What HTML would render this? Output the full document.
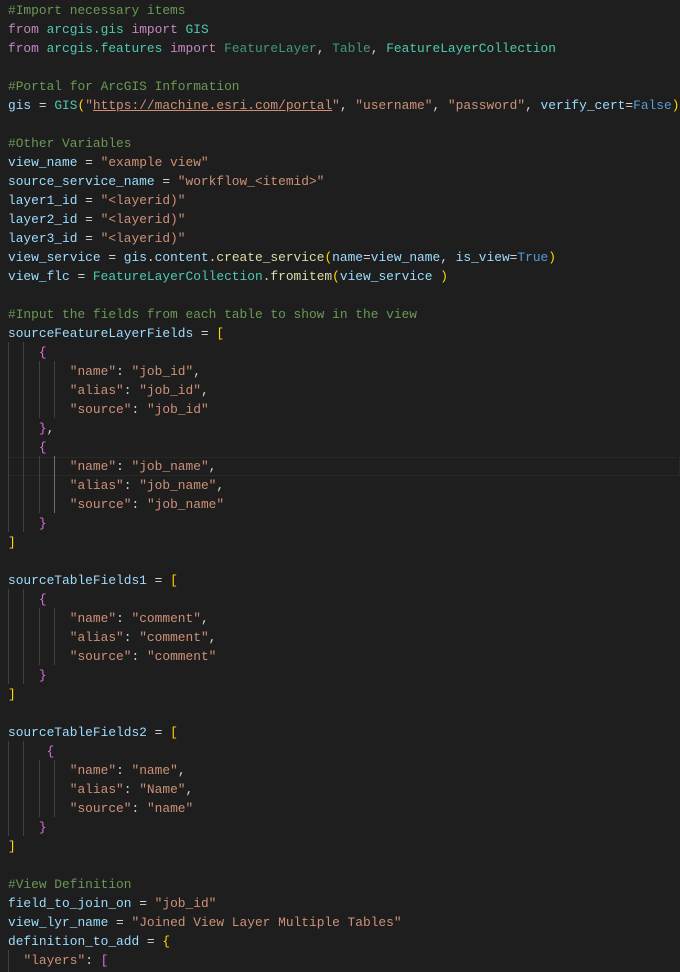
<!DOCTYPE html>
<html><head><meta charset="utf-8"><style>
body{margin:0;background:#1e1e1e;width:680px;height:972px;overflow:hidden;position:relative}
.c{position:absolute;left:8px;top:1px;font-family:"Liberation Mono",monospace;font-size:12.87px;line-height:19px;color:#d4d4d4;white-space:normal}
.l{height:19px;white-space:pre}
.cm{color:#6a9955}.k{color:#c586c0}.t{color:#4ec9b0}.td{color:#4ec9b0;opacity:.7}.v{color:#9cdcfe}.s{color:#ce9178}.f{color:#dcdcaa}.b{color:#569cd6}
.y{color:#ffd700}.p{color:#da70d6}.u{text-decoration:underline;text-decoration-color:#ce9178}
.g{position:absolute;width:1px;background:#404040}
.hl{position:absolute;left:8px;right:0;top:457px;height:17px;border:1px solid #282828}
</style></head><body>
<div class="hl"></div>
<div class="g" style="left:8px;top:342px;height:190px"></div>
<div class="g" style="left:23px;top:342px;height:190px"></div>
<div class="g" style="left:39px;top:361px;height:57px"></div>
<div class="g" style="left:54px;top:361px;height:57px"></div>
<div class="g" style="left:39px;top:456px;height:57px"></div>
<div class="g" style="left:54px;top:456px;height:57px;background:#707070"></div>
<div class="g" style="left:8px;top:589px;height:95px"></div>
<div class="g" style="left:23px;top:589px;height:95px"></div>
<div class="g" style="left:39px;top:608px;height:57px"></div>
<div class="g" style="left:54px;top:608px;height:57px"></div>
<div class="g" style="left:8px;top:741px;height:95px"></div>
<div class="g" style="left:23px;top:741px;height:95px"></div>
<div class="g" style="left:39px;top:760px;height:57px"></div>
<div class="g" style="left:54px;top:760px;height:57px"></div>
<div class="g" style="left:8px;top:950px;height:22px"></div>
<div class="c"><div class="l"><span class="cm">#Import necessary items</span></div><div class="l"><span class="k">from</span> <span class="t">arcgis.gis</span> <span class="k">import</span> <span class="t">GIS</span></div><div class="l"><span class="k">from</span> <span class="t">arcgis.features</span> <span class="k">import</span> <span class="td">FeatureLayer</span>, <span class="td">Table</span>, <span class="t">FeatureLayerCollection</span></div><div class="l"> </div><div class="l"><span class="cm">#Portal for ArcGIS Information</span></div><div class="l"><span class="v">gis</span> = <span class="t">GIS</span><span class="y">(</span><span class="s">"<span class="u">https://machine.esri.com/portal</span>"</span>, <span class="s">"username"</span>, <span class="s">"password"</span>, <span class="v">verify_cert</span>=<span class="b">False</span><span class="y">)</span></div><div class="l"> </div><div class="l"><span class="cm">#Other Variables</span></div><div class="l"><span class="v">view_name</span> = <span class="s">"example view"</span></div><div class="l"><span class="v">source_service_name</span> = <span class="s">"workflow_&lt;itemid&gt;"</span></div><div class="l"><span class="v">layer1_id</span> = <span class="s">"&lt;layerid)"</span></div><div class="l"><span class="v">layer2_id</span> = <span class="s">"&lt;layerid)"</span></div><div class="l"><span class="v">layer3_id</span> = <span class="s">"&lt;layerid)"</span></div><div class="l"><span class="v">view_service</span> = <span class="v">gis</span>.<span class="v">content</span>.<span class="f">create_service</span><span class="y">(</span><span class="v">name</span>=<span class="v">view_name</span>, <span class="v">is_view</span>=<span class="b">True</span><span class="y">)</span></div><div class="l"><span class="v">view_flc</span> = <span class="t">FeatureLayerCollection</span>.<span class="f">fromitem</span><span class="y">(</span><span class="v">view_service</span> <span class="y">)</span></div><div class="l"> </div><div class="l"><span class="cm">#Input the fields from each table to show in the view</span></div><div class="l"><span class="v">sourceFeatureLayerFields</span> = <span class="y">[</span></div><div class="l">    <span class="p">{</span></div><div class="l">        <span class="s">"name"</span>: <span class="s">"job_id"</span>,</div><div class="l">        <span class="s">"alias"</span>: <span class="s">"job_id"</span>,</div><div class="l">        <span class="s">"source"</span>: <span class="s">"job_id"</span></div><div class="l">    <span class="p">}</span>,</div><div class="l">    <span class="p">{</span></div><div class="l">        <span class="s">"name"</span>: <span class="s">"job_name"</span>,</div><div class="l">        <span class="s">"alias"</span>: <span class="s">"job_name"</span>,</div><div class="l">        <span class="s">"source"</span>: <span class="s">"job_name"</span></div><div class="l">    <span class="p">}</span></div><div class="l"><span class="y">]</span></div><div class="l"> </div><div class="l"><span class="v">sourceTableFields1</span> = <span class="y">[</span></div><div class="l">    <span class="p">{</span></div><div class="l">        <span class="s">"name"</span>: <span class="s">"comment"</span>,</div><div class="l">        <span class="s">"alias"</span>: <span class="s">"comment"</span>,</div><div class="l">        <span class="s">"source"</span>: <span class="s">"comment"</span></div><div class="l">    <span class="p">}</span></div><div class="l"><span class="y">]</span></div><div class="l"> </div><div class="l"><span class="v">sourceTableFields2</span> = <span class="y">[</span></div><div class="l">     <span class="p">{</span></div><div class="l">        <span class="s">"name"</span>: <span class="s">"name"</span>,</div><div class="l">        <span class="s">"alias"</span>: <span class="s">"Name"</span>,</div><div class="l">        <span class="s">"source"</span>: <span class="s">"name"</span></div><div class="l">    <span class="p">}</span></div><div class="l"><span class="y">]</span></div><div class="l"> </div><div class="l"><span class="cm">#View Definition</span></div><div class="l"><span class="v">field_to_join_on</span> = <span class="s">"job_id"</span></div><div class="l"><span class="v">view_lyr_name</span> = <span class="s">"Joined View Layer Multiple Tables"</span></div><div class="l"><span class="v">definition_to_add</span> = <span class="y">{</span></div><div class="l">  <span class="s">"layers"</span>: <span class="p">[</span></div></div>
</body></html>
